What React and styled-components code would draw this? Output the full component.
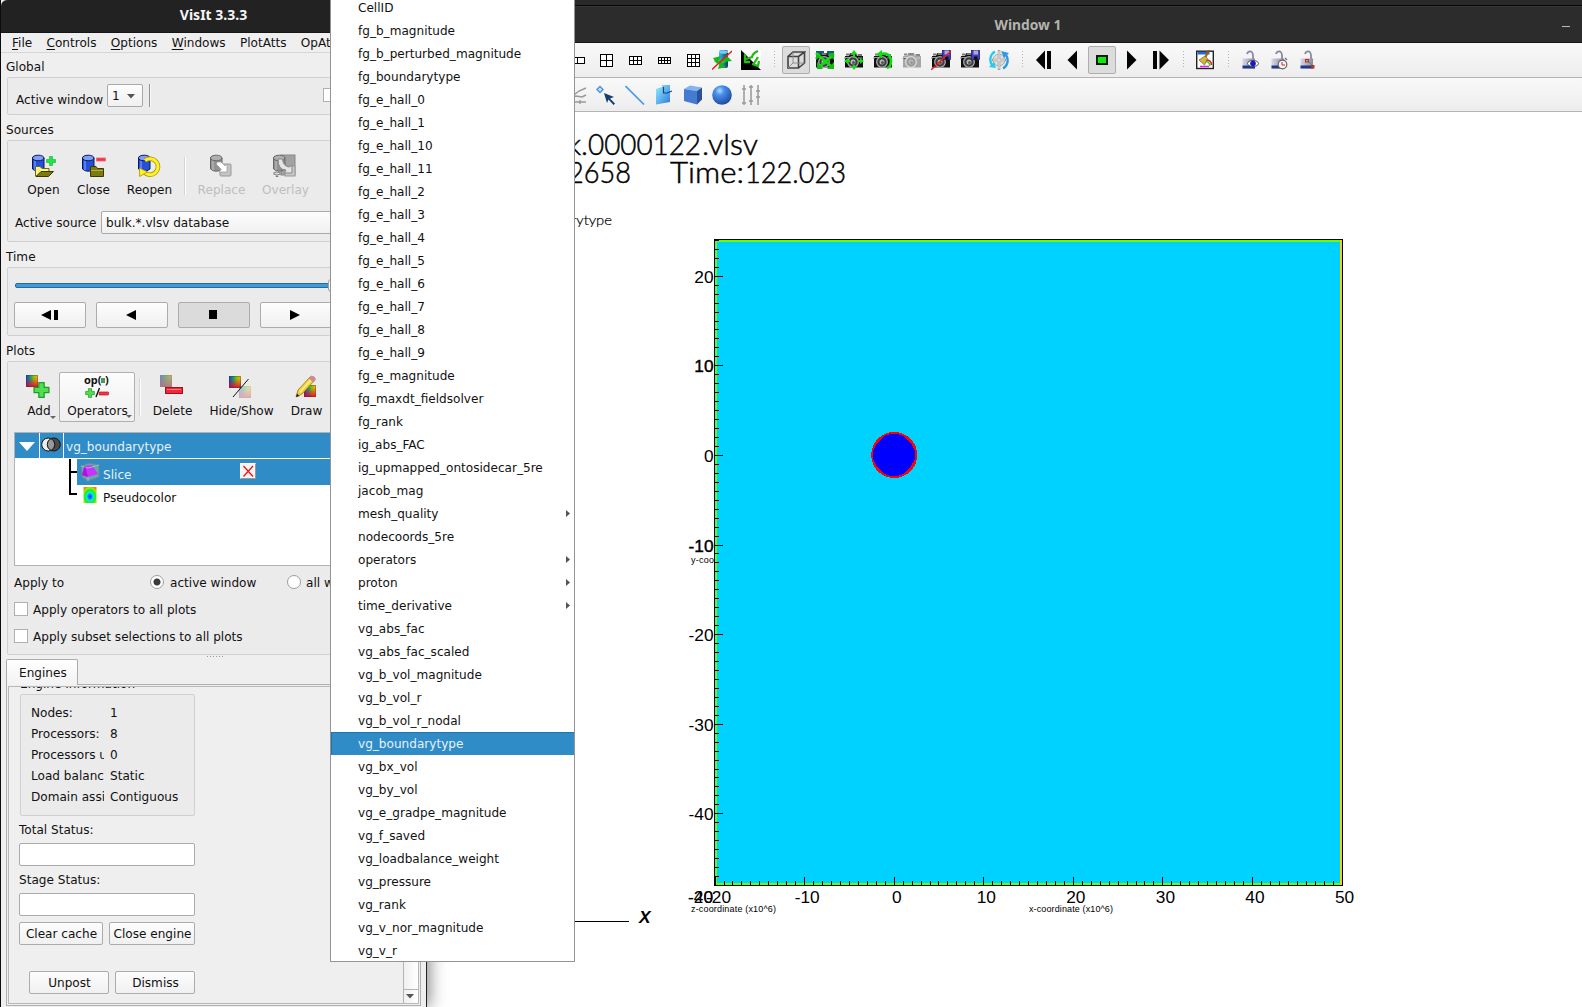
import React from "react";
import styled, { createGlobalStyle, css } from "styled-components";

const Global = createGlobalStyle`
  html, body { margin: 0; padding: 0; }
  body { overflow: hidden; background: #fff; }
  * { box-sizing: border-box; }
  svg { display: block; flex: none; }
`;

const sans = `"DejaVu Sans", Verdana, sans-serif`;
const titleFont = `"Noto Sans", "Open Sans", sans-serif`;

const Desktop = styled.div`
  position: relative;
  width: 1582px;
  height: 1007px;
  overflow: hidden;
  background: #fff;
  font: 12.08px/14px ${sans};
  color: #111;
  white-space: nowrap;
`;

/* ---------- viewer window ---------- */
const Viewer = styled.section`
  position: absolute;
  left: 427px;
  top: 0;
  width: 1155px;
  height: 1007px;
  display: flex;
  flex-direction: column;
  background: #fff;
`;
const BackBar = styled.div`
  height: 6px;
  background: #292929;
  border-bottom: 1px solid #050505;
`;
const ViewerTitle = styled.header`
  height: 37px;
  display: flex;
  align-items: center;
  padding-left: 67px;
  background: #2c2c2c;
  border-top: 1px solid #3a3a3a;
  border-bottom: 1px solid #161616;
  font: 700 13.800px/20px ${titleFont};
  color: #b4b4ae;
`;
const TitleText = styled.span`
  flex: 1;
  text-align: center;
`;
const Minimize = styled.i`
  width: 8px;
  height: 1px;
  margin: 3px 12px 0 0;
  background: #bbb;
`;
const ToolBar = styled.div`
  display: flex;
  align-items: center;
  height: ${(p) => p.$h}px;
  padding-left: 136px;
  background: linear-gradient(#f9f9f9, #ededed);
  border-bottom: 1px solid #b4b4b4;
`;
const Slot = styled.span`
  width: 29px;
  height: 28px;
  display: flex;
  align-items: center;
  justify-content: center;
  & svg[width="20"] { margin-left: -1px; }
  & svg[width="18"] { margin-left: -2px; }
  ${(p) =>
    p.$on &&
    css`
      width: 28px;
      margin-right: 1px;
      background: #dcdcdc;
      border: 1px solid #aeaeae;
      border-radius: 2px;
    `}
`;
const Grip = styled.i`
  width: 16px;
  height: 18px;
  padding: 0 4px 0 8px;
  background: radial-gradient(circle at 0.5px 0.5px, #b5b5b5 0.7px, transparent 0.8px) 0 0 / 4px 3px content-box;
`;
const Canvas = styled.div`
  flex: 1;
  overflow: hidden;
`;

/* ---------- control panel ---------- */
const Panel = styled.section`
  position: absolute;
  left: 0;
  top: 0;
  width: 427px;
  height: 1007px;
  display: flex;
  flex-direction: column;
  background: #efefef;
  border-left: 1px solid #0c0c0c;
  border-right: 1px solid #222;
  box-shadow: 2px 0 16px rgba(0, 0, 0, 0.5);
`;
const PanelTitle = styled.header`
  height: 33px;
  background: #222;
  border-bottom: 1px solid #161616;
  border-top-left-radius: 6px;
  text-align: center;
  font: 700 14px/29px ${titleFont};
  color: #f6f6f6;
`;
const MenuBar = styled.nav`
  height: 20px;
  display: flex;
  gap: 14.300px;
  padding-left: 11px;
  line-height: 20px;
  border-bottom: 1px solid #d6d6d6;
  & u { text-underline-offset: 2px; }
`;
const SectionLabel = styled.div`
  height: ${(p) => p.$h || 25}px;
  padding-left: 5px;
  line-height: ${(p) => (p.$h ? 29 : 31)}px;
`;
const Group = styled.div`
  height: ${(p) => p.$h}px;
  margin: 0 5px 0 6px;
  background: #ebebeb;
  border: 1px solid #d0d0d0;
  border-radius: 2px;
`;
const GlobalRow = styled.div`
  display: flex;
  padding: 6px 0 0 8px;
`;
const RowLabel = styled.span`
  width: ${(p) => p.$w}px;
  padding-top: ${(p) => p.$t || 0}px;
`;
const Combo = styled.div`
  width: ${(p) => p.$w}px;
  height: 23px;
  display: flex;
  align-items: center;
  justify-content: space-between;
  padding: 1px 7px 0 4px;
  border: 1px solid #a9a9a9;
  border-radius: 2px;
  background: linear-gradient(#fdfdfd, #f0f0f0);
`;
const Bar = styled.i`
  width: 2px;
  height: 23px;
  margin: 0 172px 0 6px;
  border-left: 1px solid #909090;
  border-right: 1px solid #fafafa;
`;
const Check = styled.i`
  flex: none;
  width: 14px;
  height: 14px;
  margin-top: ${(p) => p.$t || 0}px;
  border: 1px solid #b0b0b0;
  background: #fff;
`;
const Actions = styled.div`
  display: flex;
  align-items: flex-start;
  padding: 10px 0 0 10px;
  height: ${(p) => p.$h}px;
`;
const Action = styled.div`
  position: relative;
  width: ${(p) => p.$w}px;
  height: 50px;
  display: flex;
  flex-direction: column;
  align-items: center;
  padding-top: ${(p) => (p.$raised ? 2 : 3)}px;
  padding-left: 1px;
  gap: 5px;
  color: ${(p) => (p.$off ? "#bebebe" : "#111")};
  ${(p) =>
    p.$raised &&
    css`
      border: 1px solid #b0b0b0;
      border-radius: 2px;
      background: linear-gradient(#fcfcfc, #efefef);
    `}
  & svg { margin-left: -1px; }
`;
const Drop = styled.i`
  position: absolute;
  right: ${(p) => p.$r}px;
  bottom: 3px;
  border: 3px solid transparent;
  border-top-color: #666;
  border-bottom: 0;
`;
const Divider = styled.i`
  width: 2px;
  height: 38px;
  margin: 6px 4px 0;
  border-left: 1px solid #d4d4d4;
  border-right: 1px solid #fff;
`;
const SourceRow = styled.div`
  display: flex;
  padding-left: 7px;
`;
const Slider = styled.div`
  height: 5px;
  width: 314px;
  margin: 15px 0 14px 7px;
  border: 1px solid #27699a;
  border-radius: 2px;
  background: #409bd6;
`;
const SliderHandle = styled.i`
  display: block;
  width: 14px;
  height: 13px;
  margin: -5px 0 0 312px;
  border: 1px solid #a0a0a0;
  border-radius: 3px;
  background: #f8f8f8;
`;
const Playback = styled.div`
  display: flex;
  gap: 10px;
  padding-left: 6px;
`;
const PlayButton = styled.span`
  width: 72px;
  height: 26px;
  display: flex;
  align-items: center;
  justify-content: center;
  padding: 0 2px 1px 0;
  border: 1px solid #acacac;
  border-radius: 2px;
  background: ${(p) => (p.$on ? "#dbdbdb" : "linear-gradient(#fdfdfd,#f0f0f0)")};
`;
const PlotList = styled.div`
  height: 134px;
  margin: 0 6px;
  border: 1px solid #b2b2b2;
  background: #fff;
`;
const PlotHead = styled.div`
  height: 26px;
  display: flex;
  align-items: center;
  background: #308cc6;
  border-bottom: 1px solid #fff;
  color: #e6f2fa;
`;
const PlotCell = styled.span`
  width: ${(p) => p.$w}px;
  height: 25px;
  padding: ${(p) => p.$t || 0}px 1px 2px 0;
  display: flex;
  align-items: center;
  justify-content: center;
  border-right: 1px solid #fff;
`;
const PlotName = styled.span`
  padding: 2px 0 0 2px;
`;
const PlotTree = styled.div`
  display: flex;
`;
const PlotChildren = styled.div`
  flex: 1;
`;
const PlotChild = styled.div`
  height: ${(p) => (p.$on ? 26 : 20)}px;
  display: flex;
  align-items: center;
  padding-left: 3px;
  background: ${(p) => (p.$on ? "#308cc6" : "transparent")};
  color: ${(p) => (p.$on ? "#e6f2fa" : "#111")};
`;
const ChildName = styled.span`
  width: 140px;
  padding: 5px 0 0 3px;
`;
const RemoveBox = styled.span`
  width: 16px;
  height: 16px;
  margin-bottom: 2px;
  padding: 1px;
  background: #f4f4f4;
  border: 1px solid #fff;
  border-right-color: #999;
  border-bottom-color: #999;
`;
const OptionRow = styled.div`
  height: ${(p) => p.$h || 27}px;
  display: flex;
  align-items: center;
  gap: 5px;
  padding-left: 6px;
`;
const Radio = styled.i`
  flex: none;
  width: 14px;
  height: 14px;
  border: 1px solid #9e9e9e;
  border-radius: 50%;
  background: ${(p) => (p.$on ? "radial-gradient(#3a3a3a 3px, #fff 4px)" : "#fff")};
`;
const OptionText = styled.span`
  width: ${(p) => (p.$w ? `${p.$w}px` : "auto")};
  padding: 2px 0 0 ${(p) => p.$l || 0}px;
`;
const Splitter = styled.div`
  height: 4px;
  display: flex;
  gap: 2px;
  padding: 1px 0 0 206px;
  & i { width: 1px; height: 1px; background: #999; }
`;
const TabStrip = styled.div`
  height: 25px;
  padding-left: 5px;
`;
const Tab = styled.span`
  position: relative;
  display: block;
  width: 72px;
  height: 26px;
  padding-left: 12px;
  line-height: 27px;
  background: linear-gradient(#fff, #f2f2f2);
  border: 1px solid #acacac;
  border-bottom: 0;
  border-radius: 2px 2px 0 0;
`;
const TabPane = styled.div`
  height: 322px;
  margin: 0 5px;
  padding: 1px;
  border: 1px solid #b0b0b0;
`;
const ScrollArea = styled.div`
  height: 100%;
  display: flex;
  border: 1px solid #b8b8b8;
`;
const ScrollBody = styled.div`
  flex: 1;
  padding-left: 10px;
`;
const ScrollTrack = styled.div`
  width: 15px;
  display: flex;
  flex-direction: column;
  justify-content: flex-end;
  background: linear-gradient(90deg, #f0f0f0, #fff);
  border-left: 1px solid #b4b4b4;
`;
const ScrollDown = styled.span`
  height: 14px;
  display: flex;
  align-items: center;
  justify-content: center;
  padding-right: 2px;
  border-top: 1px solid #b4b4b4;
`;
const ClippedLabel = styled.div`
  height: 7px;
  display: flex;
  align-items: flex-end;
  padding: 0 0 3px 1px;
  overflow: hidden;
`;
const InfoGroup = styled.dl`
  width: 175px;
  height: 122px;
  margin: 0 0 0 1px;
  padding: 8px 0 0 10px;
  display: grid;
  grid-template-columns: 73px 1fr;
  column-gap: 6px;
  grid-auto-rows: 21px;
  line-height: 21px;
  border: 1px solid #d0d0d0;
  border-radius: 2px;
  background: #ebebeb;
  & dt { overflow: hidden; }
  & dd { margin: 0; }
`;
const FieldLabel = styled.div`
  height: 27px;
  line-height: 28px;
`;
const Field = styled.div`
  width: 176px;
  height: 23px;
  border: 1px solid #ababab;
  border-radius: 2px;
  background: #fff;
`;
const ButtonRow = styled.div`
  display: flex;
  gap: 6px;
  padding: ${(p) => p.$t}px 0 0 ${(p) => p.$l || 0}px;
`;
const Button = styled.span`
  width: ${(p) => p.$w}px;
  height: 23px;
  line-height: 22px;
  padding-left: 1px;
  text-align: center;
  border: 1px solid #acacac;
  border-radius: 2px;
  background: linear-gradient(#fdfdfd, #f0f0f0);
`;

/* ---------- popup menu ---------- */
const Menu = styled.ul`
  position: absolute;
  left: 330px;
  top: -5px;
  width: 245px;
  height: 967px;
  margin: 0;
  padding: 0;
  list-style: none;
  overflow: hidden;
  background: #fff;
  border: 1px solid #949494;
`;
const MenuItem = styled.li`
  height: 23px;
  display: flex;
  align-items: center;
  justify-content: space-between;
  padding: 0 3px 0 27px;
  ${(p) =>
    p.$on &&
    css`
      background: #308cc6;
      color: #e6f2fa;
      box-shadow: inset 1px 1px #2474a8;
    `}
`;

/* ---------- icons ---------- */
const Svg = ({ w = 20, h = 20, children, ...rest }) => (
  <svg width={w} height={h} viewBox={`0 0 ${w} ${h}`} {...rest}>{children}</svg>
);

const GridIcon = ({ w, h, cols, rows }) => (
  <Svg w={w} h={h} shapeRendering="crispEdges">
    <rect x="0.5" y="0.5" width={w - 1} height={h - 1} fill="#fff" stroke="#000" />
    {Array.from({ length: cols - 1 }, (_, i) => {
      const x = Math.round(((w - 1) * (i + 1)) / cols) + 0.5;
      return <path key={i} d={`M${x} 0V${h}`} stroke="#000" />;
    })}
    {Array.from({ length: rows - 1 }, (_, i) => {
      const y = Math.round(((h - 1) * (i + 1)) / rows) + 0.5;
      return <path key={i} d={`M0 ${y}H${w}`} stroke="#000" />;
    })}
  </Svg>
);

const Cylinder = ({ gray }) => (
  <g stroke={gray ? "#666" : "#0a1a50"} strokeWidth="1">
    <path d="M1.5 4V15Q7 19.500 13 15V4Z" fill={gray ? "#929292" : "#2450dc"} />
    <path d="M4 6V16" stroke={gray ? "#aaa" : "#5480ff"} strokeWidth="2" />
    <ellipse cx="7.200" cy="4" rx="5.800" ry="2.800" fill={gray ? "#b0b0b0" : "#7f9fff"} />
  </g>
);
const OpenIcon = () => (
  <Svg w={25} h={24}>
    <Cylinder />
    <path d="M4.500 12.500H9L11 14.500H18V17L8 22H4.500Z" fill="#fbf68c" stroke="#6a6710" />
    <path d="M5 22.500L10 17.500H22.500L17.500 22.500Z" fill="#7d7a10" stroke="#3a3900" />
    <path d="M18.500 2.500H21.500V5.500H24.500V8.500H21.500V11.500H18.500V8.500H15.500V5.500H18.500Z" fill="#18e848" stroke="#35b94e" strokeWidth=".8" />
  </Svg>
);
const CloseIcon = () => (
  <Svg w={25} h={24}>
    <Cylinder />
    <path d="M9.500 22.500V12.500H15L16.500 14.500H22.500V22.500Z" fill="#7d7a10" stroke="#3a3900" />
    <path d="M10 16.500H22" stroke="#b5b045" />
    <rect x="15.500" y="4" width="9" height="3" fill="#ff3040" stroke="#e07078" strokeWidth=".8" />
  </Svg>
);
const ReopenIcon = () => (
  <Svg w={24} h={24}>
    <Cylinder />
    <path d="M8 6.500A8 8 0 1 1 7 18" fill="none" stroke="#a89500" strokeWidth="4.600" />
    <path d="M8 6.500A8 8 0 1 1 7 18" fill="none" stroke="#fff02a" strokeWidth="3" />
    <path d="M2.500 22.500V14L10.500 18Z" fill="#fff02a" stroke="#a89500" strokeWidth=".8" />
  </Svg>
);
const ReplaceIcon = () => (
  <Svg w={24} h={24}>
    <Cylinder gray />
    <rect x="11" y="10" width="11" height="12" rx="1" fill="#c4c4c4" stroke="#999" />
    <path d="M8 8L12 8L16 12L18 10V18H10L12.500 15.500L7.500 10.500Z" fill="#fff" stroke="#999" strokeWidth=".7" />
  </Svg>
);
const OverlayIcon = () => (
  <Svg w={26} h={24}>
    <rect x="9" y="1" width="14" height="20" fill="#a2a2a2" stroke="#888" />
    <Cylinder gray />
    <rect x="13" y="12" width="10" height="10" fill="#c8c8c8" stroke="#999" />
    <path d="M6 5Q6 16 14 16L12.500 19H20V11.500L17 13Q11 12 10.500 5Z" fill="#e4e4e4" stroke="#888" />
    <path d="M5 16V23M1.500 19.500H8.500" stroke="#777" strokeWidth="2.400" />
    <path d="M5 17V22M2.500 19.500H7.500" stroke="#ddd" />
  </Svg>
);

const Defs = () => (
  <svg width="0" height="0" style={{ position: "absolute" }}>
    <defs>
      <linearGradient id="hue" x1="0" y1="0" x2="1" y2="0">
        <stop offset="0" stopColor="#2038e8" /><stop offset=".35" stopColor="#10a060" />
        <stop offset=".65" stopColor="#90c000" /><stop offset="1" stopColor="#ffb000" />
      </linearGradient>
      <linearGradient id="shade" x1="0" y1="0" x2="0" y2="1">
        <stop offset=".2" stopColor="#f00050" stopOpacity="0" /><stop offset="1" stopColor="#e80030" stopOpacity=".9" />
      </linearGradient>
      <linearGradient id="cyl"><stop offset="0" stopColor="#38b8e8" /><stop offset="1" stopColor="#0a4068" /></linearGradient>
      <linearGradient id="sky" x1="0" y1="0" x2="1" y2="1"><stop offset="0" stopColor="#90f0ff" /><stop offset="1" stopColor="#3078e0" /></linearGradient>
      <radialGradient id="ball" cx=".38" cy=".28" r=".75"><stop offset="0" stopColor="#b8dcff" /><stop offset=".3" stopColor="#4a90f0" /><stop offset="1" stopColor="#1c4898" /></radialGradient>
      <radialGradient id="pseudo" cx=".5" cy=".6" r=".65">
        <stop offset="0" stopColor="#1030ff" /><stop offset=".2" stopColor="#1080ff" /><stop offset=".4" stopColor="#10f0d0" />
        <stop offset=".62" stopColor="#10f020" /><stop offset=".85" stopColor="#a0f000" /><stop offset="1" stopColor="#ff8000" />
      </radialGradient>
      <linearGradient id="lockBody" x1="0" y1="0" x2="1" y2="0"><stop offset="0" stopColor="#d8d8e8" /><stop offset="1" stopColor="#8888a0" /></linearGradient>
    </defs>
  </svg>
);
const Swatch = ({ x, y, s = 12, opacity = 1 }) => (
  <g opacity={opacity}>
    <rect x={x} y={y} width={s} height={s} fill="url(#hue)" />
    <rect x={x} y={y} width={s} height={s} fill="url(#shade)" />
    <rect x={x + 0.5} y={y + 0.5} width={s - 1} height={s - 1} fill="none" stroke="#333" strokeOpacity=".35" />
  </g>
);
const Plus = ({ x, y, s }) => (
  <path transform={`translate(${x} ${y}) scale(${s / 16})`} d="M5.500 1H10.500V5.500H15V10.500H10.500V15H5.500V10.500H1V5.500H5.500Z" fill="#4fe050" stroke="#269a28" strokeWidth="1.200" strokeLinejoin="round" />
);
const AddIcon = () => (<Svg w={25} h={24}><Swatch x={0} y={0} /><Plus x={7} y={6.500} s={17} /></Svg>);
const OperatorsIcon = () => (
  <Svg w={26} h={24}>
    <text x="0" y="9" fontFamily="Noto Sans, sans-serif" fontWeight="700" fontSize="11" textLength="17.500" fill="#111">op(</text>
    <rect x="17" y="3" width="4" height="5" fill="#4a9a5a" />
    <text x="21" y="9" fontFamily="Noto Sans, sans-serif" fontWeight="700" fontSize="11" fill="#111">)</text>
    <Plus x={1} y={13} s={10} />
    <path d="M12 22L15.500 13" stroke="#111" strokeWidth="1.400" />
    <rect x="15" y="17" width="9.500" height="3" rx=".5" fill="#ff3040" stroke="#b81828" strokeWidth=".7" />
  </Svg>
);
const DeleteIcon = () => (
  <Svg w={26} h={24}><Swatch x={1} y={0} opacity={0.5} /><rect x="1" y="0" width="12" height="12" fill="#707070" opacity=".4" />
    <rect x="6.500" y="12.500" width="17" height="6" fill="#f02838" stroke="#a01020" /><path d="M8 14.500H22" stroke="#ff8088" /></Svg>
);
const HideIcon = () => (
  <Svg w={24} h={24}><Swatch x={0} y={1} /><Swatch x={10} y={11} opacity={0.3} /><path d="M4 22L19.500 4" stroke="#111" /></Svg>
);
const DrawIcon = () => (
  <Svg w={24} h={24}><Swatch x={10} y={10} s={12} />
    <g transform="translate(1 0)">
      <path d="M1 22L3 15L15 2L19 6L7 19Z" fill="#f4cf36" stroke="#9a7410" strokeWidth=".8" /><path d="M5 17L16 5" stroke="#fff0a0" strokeWidth="1.500" />
      <path d="M14 3L16 1Q20 1 20.500 4.500L18.500 7Z" fill="#e88090" stroke="#999" strokeWidth=".8" /><path d="M1 22L2 18.500L4.500 21Z" fill="#222" />
    </g></Svg>
);

const CameraBase = ({ gray }) => (
  <g>
    <path d="M1 6H5L6 3H12L13 6H19V17.500H1Z" fill={gray ? "#a5a5a5" : "#111"} />
    <path d="M2 4.500H5M6.500 4H11.500M13.500 5H18" stroke={gray ? "#888" : "#777"} strokeWidth="2" />
    <path d="M1 9V7.500H6M14 8H18.500" stroke={gray ? "#ccc" : "#999"} strokeWidth="1.200" />
    <circle cx="9" cy="12" r="5.300" fill={gray ? "#999" : "#3c3c3c"} stroke={gray ? "#ddd" : "#a8a8a8"} strokeWidth="1.300" />
    <circle cx="9" cy="12" r="2.500" fill={gray ? "#bbb" : "#bababa"} />
    <circle cx="9.500" cy="12.500" r="1.500" fill={gray ? "#999" : "#555"} />
  </g>
);
const Disk = ({ x, y }) => (
  <g transform={`translate(${x} ${y})`}><rect width="8" height="9" fill="#4540b8" stroke="#221e70" strokeWidth=".8" /><rect x="2" y="0" width="4.500" height="4" fill="#a8a8e8" /><rect x="2.500" y="6" width="3.500" height="3" fill="#111" /></g>
);
const green = { stroke: "#10dd10", fill: "none", strokeWidth: 2 };
const cameras = {
  reset: (<><rect x="1" y="1" width="8" height="6" fill="#0a5f70" /><rect x="12" y="1" width="7" height="6" fill="#0a5f70" /><CameraBase /><path d="M1 3L18 18M19 4L3 18" stroke="#10dd10" strokeWidth="2.600" /><path d="M2 12V19H8ZM12 19H19V12ZM1 5V10L6 6ZM14 3L19 10V3Z" fill="#10bb10" /></>),
  recenter: (<><CameraBase /><path {...green} d="M10 1V8M10 15V19M1 11H6M14 11H19" /><path d="M7 4L10 0L13 4ZM7 16L10 20L13 16ZM4 8L0 11L4 14ZM16 8L20 11L16 14Z" fill="#10dd10" /></>),
  undo: (<><CameraBase /><path d="M7 4Q18 2 18 11Q18 17 14 18" stroke="#10dd10" fill="none" strokeWidth="2.600" /><path d="M9 0V8L3 4.500Z" fill="#10dd10" /></>),
  redo: <CameraBase gray />,
  noSave: (<><CameraBase /><Disk x={11.500} y={0.500} /><path d="M0 20L20 1" stroke="#f01818" strokeWidth="1.300" /></>),
  save: (<><CameraBase /><Disk x={11.500} y={0.500} /></>),
};
const Camera = ({ kind }) => <Svg>{cameras[kind]}</Svg>;

const SpinIcon = () => (
  <Svg><rect x="7" y="0" width="9" height="18" rx="2" fill="url(#cyl)" /><ellipse cx="11.500" cy="2" rx="4.500" ry="1.800" fill="#70d0f0" />
    <path d="M3 10Q8 15 14 10" stroke="#18cc18" strokeWidth="3" fill="none" /><path d="M1 8L9 6L5 14ZM14 5L20 11L12 12ZM8 12L14 17L6 19Z" fill="#18b818" />
    <path d="M0 19.500L20 1" stroke="#f01818" strokeWidth="1.300" /></Svg>
);
const InvertIcon = () => (
  <Svg><rect width="20" height="20" fill="#fff" /><path d="M0 0L20 20H0Z" fill="#000" />
    <path d="M17 1Q12 3 11 7L5 9M4 4V12H9" stroke="#22bb10" strokeWidth="2.300" fill="none" /><path d="M12 15L17 7M11 14L17 16L18 11" stroke="#22bb10" strokeWidth="2.300" fill="none" /></Svg>
);
const BoxIcon = () => (
  <Svg fill="none" stroke="#444" strokeWidth="1.600"><path d="M2 6.500H12.500V18H2ZM2 6.500L7 2H18.500L12.500 6.500M18.500 2V13L12.500 18" /><path d="M7 2V13H18.500M7 13L2 18" stroke="#888" strokeWidth=".9" /></Svg>
);
const RefreshIcon = () => (
  <Svg><circle cx="10" cy="10" r="6" fill="#ddd" stroke="#aaa" /><path d="M10 0V20M3 10H17" stroke="#a2a2a2" strokeWidth="2.600" /><path d="M10 1V19M4 10H16" stroke="#eee" />
    <path d="M6 1.500A9.500 9.500 0 0 0 3 15" fill="none" stroke="#28c8f0" strokeWidth="2.400" /><path d="M0 17L7 18L5 12Z" fill="#28c8f0" />
    <path d="M14 18.500A9.500 9.500 0 0 0 17 5" fill="none" stroke="#3098e8" strokeWidth="2.400" /><path d="M20 3L12 1L15 8Z" fill="#3098e8" /></Svg>
);
const BrushIcon = () => (
  <Svg w={18} h={20}><rect x=".7" y="1.200" width="16.600" height="17.300" fill="#fff" stroke="#222" strokeWidth="1.400" /><rect x="1.500" y="2" width="12" height="2.500" fill="#2a68e0" />
    <path d="M8 12Q13 10 14 16" stroke="#30e030" strokeWidth="1.600" fill="none" /><path d="M10 10Q15.500 10 15.500 15" stroke="#f02020" strokeWidth="1.600" fill="none" /><path d="M4 16.500H13" stroke="#e020e0" strokeWidth="1.600" />
    <path d="M9.500 7L13 0" stroke="#8a6410" strokeWidth="2" /><path d="M3 10L9 6L11.500 8.500L8.500 15Z" fill="#d4b440" stroke="#80621a" strokeWidth=".7" /></Svg>
);
const Lock = ({ children }) => (
  <Svg w={18}><path d="M6 4Q7 1 10 1.500Q12.500 2.500 12 9" stroke="#8888a0" strokeWidth="1.800" fill="none" /><rect x="1.500" y="8.500" width="12.500" height="10" fill="url(#lockBody)" /><rect x="1.500" y="15.500" width="12.500" height="3" fill="#203888" />{children}</Svg>
);
const Tri = ({ d, w = 20 }) => <Svg w={w}><path d={d} fill="#050505" /></Svg>;

const ZigIcon = () => (<Svg fill="none" stroke="#999" strokeWidth="1.400"><path d="M2 7L8 9L12 6L19 3M2 13L9 11L15 12L19 10M2 17H19M13 15V19" /></Svg>);
const PickIcon = () => (<Svg><path d="M4 1.500L7 4.500L4 7.500L1 4.500Z" fill="#c8e8ff" stroke="#4a90e0" strokeWidth="1.400" /><path d="M8 8L18 12L14 13.500L19 18.500L17.500 20L12.500 14.500L11 18Z" fill="#123f6c" /></Svg>);
const LineIcon = () => (<Svg><path d="M.5 1L19 19.500" stroke="#4a98ec" strokeWidth="1.700" /></Svg>);
const PlaneIcon = () => (<Svg><path d="M2 4L8 2V0H16V17L2 19.500Z" fill="url(#sky)" /><path d="M9.500 2V8H13L18 6" stroke="#214070" fill="none" strokeWidth="1.200" /></Svg>);
const CubeIcon = () => (<Svg><path d="M1 4L7 0.500L19 2.500L14 6Z" fill="#86b4f0" /><path d="M1 4L14 6V19.500L1 16Z" fill="#447bd0" /><path d="M14 6L19 2.500V14.500L14 19.500Z" fill="#2a5298" /></Svg>);
const SphereIcon = () => (<Svg><circle cx="10" cy="10" r="9.800" fill="url(#ball)" /></Svg>);
const SlidersIcon = () => (<Svg fill="none" stroke="#999" strokeWidth="1.500"><path d="M3 0V20M10 0V20M17 0V20M1 4H5M1 18H5M8 2H12M8 16H12M15 6H19M15 12H19" /></Svg>);

const DownArrow = () => <Svg w={8} h={5}><path d="M0 0H8L4 4.500Z" fill="#555" /></Svg>;
const RightArrow = () => <Svg w={5} h={7}><path d="M0 0V7L4 3.500Z" fill="#555" /></Svg>;

/* ---------- plot ---------- */
const px = (v) => 894.2 + v * 8.957;
const py = (v) => 455.4 - v * 8.96;
const xs = Array.from({ length: 71 }, (_, i) => i - 20);
const ys = Array.from({ length: 73 }, (_, i) => i - 48);
const arial = { fontFamily: "'Liberation Sans', Arial, sans-serif", fontSize: 17.3 };
const fit = (n) => ({ textLength: n, lengthAdjust: "spacingAndGlyphs" });

const Plot = () => (
  <svg width="1155" height="895" viewBox="427 112 1155 895">
    <g fontFamily="Lato, sans-serif" fontWeight="300" fontSize="30" fill="#000" stroke="#000" strokeWidth=".5">
      <text x="567" y="155" {...fit(21)}>k.</text>
      <text x="588" y="155" {...fit(113)}>0000122</text>
      <text x="702" y="155" {...fit(56)}>.vlsv</text>
      <text x="568" y="183" {...fit(63)}>2658</text>
      <text x="670" y="183" {...fit(74)}>Time:</text>
      <text x="745" y="183" {...fit(101)}>122.023</text>
      <text x="571" y="225" fontSize="13.500" strokeWidth=".2" {...fit(41)}>rytype</text>
    </g>
    <g shapeRendering="crispEdges">
      <rect x="714" y="239" width="629" height="647" fill="#000" />
      <rect x="715" y="240" width="627" height="645" fill="#66ff00" />
      <rect x="717" y="242" width="623" height="641" fill="#00d2ff" />
      <rect x="1340" y="240" width="2" height="645" fill="#ffcc00" />
      <g stroke="#000">
        {xs.map((v) => { const x = Math.floor(px(v)) + 0.5; return <path key={v} d={`M${x} 885V${v % 10 ? 881 : 877}`} />; })}
        {ys.map((v) => { const y = Math.floor(py(v)) + 0.5; return <path key={v} d={`M715 ${y}H${v % 10 ? 719 : 723}`} />; })}
      </g>
      <circle cx="894.200" cy="455" r="23" fill="#f00" />
      <path d="M886 435L891 434H898L903 436L911 443L915 451V459L911 466L903 474L897 476H890L884 474L877 467L873 459V451L877 443Z" fill="#00f" />
      <path d="M560 921.500H629" stroke="#000" />
    </g>
    <g {...arial}>
      {[-10, 0, 10, 20, 30, 40, 50].map((v) => (
        <text key={v} x={px(v) + 2.5} y="902.500" textAnchor="middle">{v}</text>
      ))}
      {[20, 10, 0, -10, -20, -30, -40].map((v) => (
        <text key={v} x="713.500" y={py(v) + 6.500} textAnchor="end" stroke="#000" strokeWidth={Math.abs(v) === 10 ? 0.4 : 0}>{v}</text>
      ))}
      <text x="713" y="902.500" textAnchor="end">-40</text>
      <text x="713" y="902.500" textAnchor="end">-20</text>
      <text x="731" y="902.500" textAnchor="end">-20</text>
    </g>
    <g {...arial} fontSize="9">
      <text x="691" y="912" textLength="85">z-coordinate (x10^6)</text>
      <text x="1029" y="912" textLength="84">x-coordinate (x10^6)</text>
      <text x="691" y="563" textLength="23">y-coo</text>
    </g>
    <text x="639" y="923" {...arial} fontWeight="700" fontStyle="italic">X</text>
  </svg>
);

const hall = [0, 1, 10, 11, 2, 3, 4, 5, 6, 7, 8, 9].map((n) => `fg_e_hall_${n}`);
const variables = [
  "CellID", "fg_b_magnitude", "fg_b_perturbed_magnitude", "fg_boundarytype", ...hall,
  "fg_e_magnitude", "fg_maxdt_fieldsolver", "fg_rank", "ig_abs_FAC", "ig_upmapped_ontosidecar_5re",
  "jacob_mag", "mesh_quality", "nodecoords_5re", "operators", "proton", "time_derivative",
  "vg_abs_fac", "vg_abs_fac_scaled", "vg_b_vol_magnitude", "vg_b_vol_r", "vg_b_vol_r_nodal",
  "vg_boundarytype", "vg_bx_vol", "vg_by_vol", "vg_e_gradpe_magnitude", "vg_f_saved",
  "vg_loadbalance_weight", "vg_pressure", "vg_rank", "vg_v_nor_magnitude", "vg_v_r",
];
const submenus = ["mesh_quality", "operators", "proton", "time_derivative"];
const engineInfo = [["Nodes:", "1"], ["Processors:", "8"], ["Processors using:", "0"], ["Load balancing:", "Static"], ["Domain assignment:", "Contiguous"]];

export default function App() {
  return (
    <Desktop>
      <Global />
      <Defs />
      <Viewer>
        <BackBar />
        <ViewerTitle><TitleText>Window 1</TitleText><Minimize /></ViewerTitle>
        <ToolBar $h={35}>
          <Slot><GridIcon w={15} h={7} cols={2} rows={1} /></Slot>
          <Slot><GridIcon w={13} h={13} cols={2} rows={2} /></Slot>
          <Slot><GridIcon w={13} h={9} cols={3} rows={2} /></Slot>
          <Slot><GridIcon w={13} h={7} cols={4} rows={2} /></Slot>
          <Slot><GridIcon w={13} h={13} cols={3} rows={3} /></Slot>
          <Slot><SpinIcon /></Slot>
          <Slot><InvertIcon /></Slot>
          <Grip />
          <Slot $on><BoxIcon /></Slot>
          {Object.keys(cameras).map((kind) => <Slot key={kind}><Camera kind={kind} /></Slot>)}
          <Slot><RefreshIcon /></Slot>
          <Grip />
          <Slot><Tri d="M2 10L11 0.500V19.500ZM13 1H17V19H13Z" /></Slot>
          <Slot><Tri d="M4.500 10L14 0.500V19.500Z" /></Slot>
          <Slot $on><Svg w={12} h={10}><rect x="1" y="1" width="10" height="8" fill="#10e810" stroke="#052005" strokeWidth="2" /></Svg></Slot>
          <Slot><Tri d="M6 0.500V19.500L15.500 10Z" /></Slot>
          <Slot><Tri d="M3 1H7V19H3ZM9.500 0.500V19.500L19 10Z" /></Slot>
          <Grip />
          <Slot><BrushIcon /></Slot>
          <Grip />
          <Slot><Lock><ellipse cx="12" cy="13.500" rx="5.500" ry="3" fill="#fff" stroke="#333" strokeWidth=".8" /><circle cx="12" cy="13.500" r="2.800" fill="#1818c8" /></Lock></Slot>
          <Slot><Lock><circle cx="12.500" cy="14.500" r="4.300" fill="#f4f4f4" stroke="#666" strokeWidth="1.200" /><path d="M12 12V15H15" stroke="#e02020" fill="none" /><path d="M15 8L17 10" stroke="#777" strokeWidth="1.500" /></Lock></Slot>
          <Slot><Lock><path d="M9 11L15 17" stroke="#20a060" /><rect x="6.500" y="9.500" width="3" height="2.500" fill="#5c8" stroke="#e02020" /><rect x="12.500" y="15.500" width="2.500" height="2.500" fill="#185" stroke="#e02020" /></Lock></Slot>
        </ToolBar>
        <ToolBar $h={34}>
          {[ZigIcon, PickIcon, LineIcon, PlaneIcon, CubeIcon, SphereIcon, SlidersIcon].map((I, i) => <Slot key={i}><I /></Slot>)}
        </ToolBar>
        <Canvas><Plot /></Canvas>
      </Viewer>

      <Panel>
        <PanelTitle>VisIt 3.3.3</PanelTitle>
        <MenuBar>
          <span><u>F</u>ile</span><span><u>C</u>ontrols</span><span><u>O</u>ptions</span><span><u>W</u>indows</span><span>PlotAtts</span><span>OpAtts</span>
        </MenuBar>
        <SectionLabel $h={24}>Global</SectionLabel>
        <Group $h={38}>
          <GlobalRow>
            <RowLabel $w={91} $t={9}>Active window</RowLabel>
            <Combo $w={36}>1<DownArrow /></Combo>
            <Bar />
            <Check $t={4} />
          </GlobalRow>
        </Group>
        <SectionLabel>Sources</SectionLabel>
        <Group $h={102}>
          <Actions $h={70}>
            <Action $w={50}><OpenIcon />Open</Action>
            <Action $w={50}><CloseIcon />Close</Action>
            <Action $w={62}><ReopenIcon />Reopen</Action>
            <Divider />
            <Action $w={62} $off><ReplaceIcon />Replace</Action>
            <Action $w={66} $off><OverlayIcon />Overlay</Action>
          </Actions>
          <SourceRow>
            <RowLabel $w={86} $t={5}>Active source</RowLabel>
            <Combo $w={312}>bulk.*.vlsv database</Combo>
          </SourceRow>
        </Group>
        <SectionLabel>Time</SectionLabel>
        <Group $h={69}>
          <Slider><SliderHandle /></Slider>
          <Playback>
            <PlayButton><Svg w={17} h={10}><path d="M0 5L10 0V10ZM13 0H17V10H13Z" /></Svg></PlayButton>
            <PlayButton><Svg w={10} h={10}><path d="M0 5L10 0V10Z" /></Svg></PlayButton>
            <PlayButton $on><Svg w={8} h={9}><path d="M0 0H8V9H0Z" /></Svg></PlayButton>
            <PlayButton><Svg w={10} h={10}><path d="M0 0V10L10 5Z" /></Svg></PlayButton>
          </Playback>
        </Group>
        <SectionLabel>Plots</SectionLabel>
        <Group $h={294}>
          <Actions $h={70}>
            <Action $w={41}><AddIcon />Add<Drop $r={3} /></Action>
            <Action $w={76} $raised><OperatorsIcon />Operators<Drop $r={2} /></Action>
            <Divider />
            <Action $w={54}><DeleteIcon />Delete</Action>
            <Action $w={84}><HideIcon />Hide/Show</Action>
            <Action $w={46}><DrawIcon />Draw</Action>
          </Actions>
          <PlotList>
            <PlotHead>
              <PlotCell $w={25} $t={3}><Svg w={16} h={9}><path d="M0 0H16L8 9Z" fill="#fff" /></Svg></PlotCell>
              <PlotCell $w={24}>
                <Svg w={20} h={15}>
                  <circle cx="12.800" cy="7.500" r="6.500" fill="#4a4a4a" stroke="#111" /><circle cx="7.200" cy="7.500" r="6.500" fill="#ececec" stroke="#111" />
                  <path d="M10 1.600A6.500 6.500 0 0 1 10 13.400A6.500 6.500 0 0 1 10 1.600Z" fill="#999" stroke="#111" />
                </Svg>
              </PlotCell>
              <PlotName>vg_boundarytype</PlotName>
            </PlotHead>
            <PlotTree>
              <Svg w={62} h={50} shapeRendering="crispEdges"><path d="M55 0V36M54 13H62M54 35H62" stroke="#000" strokeWidth="2" /></Svg>
              <PlotChildren>
                <PlotChild $on>
                  <Svg w={20} h={20}>
                    <path d="M1 4L9 1L19 3V15L8 19L2 15Z" fill="#6aa5aa" stroke="#5a8d98" /><path d="M4 4L12 3L18 12L8 15L2 13Z" fill="#c832ff" /><path d="M1 4L8 6L19 3M8 15V19" stroke="#8fc5c5" fill="none" /><path d="M2 13L5 4L8 15Z" fill="#b010d8" />
                  </Svg>
                  <ChildName>Slice</ChildName>
                  <RemoveBox><Svg w={12} h={12}><path d="M1.500 1L11 11.500M11 1L1.500 11.500" stroke="#e81818" strokeWidth="1.300" /></Svg></RemoveBox>
                </PlotChild>
                <PlotChild>
                  <Svg w={20} h={18}><rect x="3.500" y="1" width="13" height="16" fill="url(#pseudo)" /></Svg>
                  <ChildName>Pseudocolor</ChildName>
                </PlotChild>
              </PlotChildren>
            </PlotTree>
          </PlotList>
          <OptionRow $h={31}><OptionText $w={131}>Apply to</OptionText><Radio $on /><OptionText $w={113} $l={1}>active window</OptionText><Radio /><OptionText>all windows</OptionText></OptionRow>
          <OptionRow $h={24}><Check /><OptionText>Apply operators to all plots</OptionText></OptionRow>
          <OptionRow $h={30}><Check /><OptionText>Apply subset selections to all plots</OptionText></OptionRow>
        </Group>
        <Splitter><i /><i /><i /><i /><i /><i /></Splitter>
        <TabStrip><Tab>Engines</Tab></TabStrip>
        <TabPane>
          <ScrollArea>
            <ScrollBody>
              <ClippedLabel>Engine Information</ClippedLabel>
              <InfoGroup>
                {engineInfo.map(([k, v]) => <React.Fragment key={k}><dt>{k}</dt><dd>{v}</dd></React.Fragment>)}
              </InfoGroup>
              <FieldLabel>Total Status:</FieldLabel>
              <Field />
              <FieldLabel>Stage Status:</FieldLabel>
              <Field />
              <ButtonRow $t={6}><Button $w={84}>Clear cache</Button><Button $w={86}>Close engine</Button></ButtonRow>
              <ButtonRow $t={26} $l={10}><Button $w={80}>Unpost</Button><Button $w={80}>Dismiss</Button></ButtonRow>
            </ScrollBody>
            <ScrollTrack><ScrollDown><DownArrow /></ScrollDown></ScrollTrack>
          </ScrollArea>
        </TabPane>
      </Panel>

      <Menu>
        {variables.map((name) => (
          <MenuItem key={name} $on={name === "vg_boundarytype"}>{name}{submenus.includes(name) && <RightArrow />}</MenuItem>
        ))}
      </Menu>
    </Desktop>
  );
}
